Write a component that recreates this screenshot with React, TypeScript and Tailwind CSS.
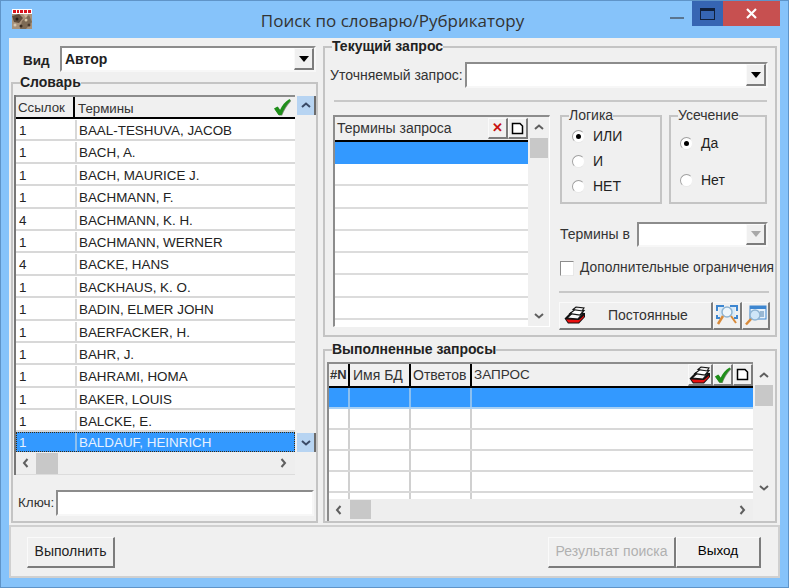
import type { ReactNode } from 'react';

const TERMS: [string, string][] = [
  ['1', 'BAAL-TESHUVA, JACOB'],
  ['1', 'BACH, A.'],
  ['1', 'BACH, MAURICE J.'],
  ['1', 'BACHMANN, F.'],
  ['4', 'BACHMANN, K. H.'],
  ['1', 'BACHMANN, WERNER'],
  ['4', 'BACKE, HANS'],
  ['1', 'BACKHAUS, K. O.'],
  ['1', 'BADIN, ELMER JOHN'],
  ['1', 'BAERFACKER, H.'],
  ['1', 'BAHR, J.'],
  ['1', 'BAHRAMI, HOMA'],
  ['1', 'BAKER, LOUIS'],
  ['1', 'BALCKE, E.'],
];

const raised = 'border-t border-l border-t-[#fafafa] border-l-[#fafafa] border-b-2 border-r-2 border-b-[#7c7c7c] border-r-[#7c7c7c] bg-[#f0f0f0]';
const sunken = 'border-t-2 border-l-2 border-t-[#8c8c8c] border-l-[#8c8c8c] border-b-2 border-r-2 border-b-[#f7f7f7] border-r-[#f7f7f7] bg-white';

function Chevron({ dir, dark }: { dir: 'up' | 'down' | 'left' | 'right'; dark?: boolean }) {
  const paths = {
    up: 'M2 7L6 3.5L10 7',
    down: 'M2 4L6 7.5L10 4',
    left: 'M7.5 2L4 6L7.5 10',
    right: 'M4.5 2L8 6L4.5 10',
  };
  return (
    <svg width="12" height="12" viewBox="0 0 12 12" fill="none" stroke={dark ? '#3a4a66' : '#5f5f5f'} strokeWidth="2">
      <path d={paths[dir]} />
    </svg>
  );
}

function ComboArrow({ muted }: { muted?: boolean }) {
  return (
    <div className={`w-[20px] h-full flex items-center justify-center ${raised}`}>
      <svg width="10" height="6" viewBox="0 0 10 6">
        <path d="M0 0H10L5 6Z" fill={muted ? '#a8a8a8' : '#000'} />
      </svg>
    </div>
  );
}

function Group({ title, className, bold, children }: { title: string; className: string; bold?: boolean; children?: ReactNode }) {
  return (
    <div className={`relative border-2 border-[#c4c4c4] ${className}`}>
      <span className={`absolute -top-[9px] bg-[#f0f0f0] leading-[14px] text-[14px] ${bold ? 'left-[7px] font-bold text-[#222]' : 'left-[7px] text-[#333]'}`}>
        {title}
      </span>
      {children}
    </div>
  );
}

function Radio({ label, checked, className }: { label: string; checked?: boolean; className?: string }) {
  return (
    <div className={`flex items-center gap-[8px] h-[16px] ${className ?? ''}`}>
      <div className="w-[13px] h-[13px] rounded-full bg-white border border-[#a0a0a0] border-r-[#f0f0f0] border-b-[#e8e8e8] flex items-center justify-center">
        {checked && <div className="w-[5px] h-[5px] rounded-full bg-black" />}
      </div>
      <span className="text-[14px] text-[#222]">{label}</span>
    </div>
  );
}

function StampIcon() {
  return (
    <svg width="22" height="18" viewBox="0 0 22 18">
      <path d="M0.5 12.5L7 6L21 7V11L15 17.5H4Z" fill="#111" />
      <path d="M2 13.5L15 14L20 9.5V11L14.5 16.5H4.5Z" fill="#e80f0f" />
      <path d="M3 12L9 6.5L19 7.5L14 13Z" fill="#f6f6f6" stroke="#111" strokeWidth="1.2" />
      <path d="M6 7.5L11 3.5L20 4.5L16 9Z" fill="#fff" stroke="#111" strokeWidth="1.2" />
      <path d="M9 3.5L12 1L20 2L18 5Z" fill="#ececec" stroke="#111" strokeWidth="1.1" />
    </svg>
  );
}

function CheckIcon({ size = 18 }: { size?: number }) {
  return (
    <svg width={size} height={size} viewBox="0 0 18 18">
      <path d="M1 10.5L4.5 8.5L7 12C9 7.5 12 3.5 16.5 1L17.5 2.5C13.5 6.5 10.5 11.5 8.5 17H5.5Z" fill="#7a8a74" transform="translate(0.6 0.6)" />
      <path d="M1 10.5L4.5 8.5L7 12C9 7.5 12 3.5 16.5 1L17.5 2.5C13.5 6.5 10.5 11.5 8.5 17H5.5Z" fill="#1f8f1a" />
    </svg>
  );
}

function PageIcon() {
  return (
    <svg width="13" height="13" viewBox="0 0 13 13" fill="#fff" stroke="#000" strokeWidth="1.5">
      <path d="M1.5 1.5H9L11.5 4V11.5H1.5Z" />
    </svg>
  );
}

function LensIcon({ window: win }: { window?: boolean }) {
  if (win) {
    return (
      <svg width="22" height="22" viewBox="0 0 22 22">
        <rect x="5" y="2" width="16" height="13" fill="#e8f2fb" stroke="#3d86d0" />
        <rect x="5" y="2" width="16" height="3" fill="#3d86d0" />
        <rect x="15" y="7" width="4" height="6" fill="#9ab8d4" />
        <circle cx="10" cy="11" r="5" fill="#cfe6f8" stroke="#8fb4d2" strokeWidth="1.5" />
        <path d="M6 15L1 20.5" stroke="#d88a3a" strokeWidth="2.5" />
      </svg>
    );
  }
  return (
    <svg width="22" height="22" viewBox="0 0 22 22">
      <path d="M1 7V2H8M14 2H21V7M1 11V14H4M18 14H21V11" fill="none" stroke="#3d86d0" strokeWidth="2" />
      <rect x="3" y="3" width="16" height="10" fill="#d8eaf8" />
      <circle cx="11" cy="8" r="5" fill="#eef6fc" stroke="#8fb4d2" strokeWidth="1.5" />
      <path d="M7 12L2 20" stroke="#d88a3a" strokeWidth="2.5" />
      <path d="M15 12L20 19" stroke="#d88a3a" strokeWidth="2" />
    </svg>
  );
}

function AppLogo() {
  return (
    <svg width="20" height="20" viewBox="0 0 20 20">
      <rect width="20" height="20" fill="#a8927a" />
      <rect width="20" height="5" fill="#fff" />
      <path d="M1 1h3v3H1zM5 1h2v3H5zM8 1h3v3H8zM12 1h3v3h-3zM16 1h3v3h-3z" fill="#d8141c" />
      <path d="M0 7L7 5L11 9L7 14L2 13Z" fill="#5e4c3c" />
      <path d="M10 12L17 6L20 13L14 20H8Z" fill="#7d6a54" />
      <path d="M11 5H16L14 9Z" fill="#c8b498" />
      <circle cx="5" cy="10" r="1.5" fill="#2a2018" />
      <circle cx="14" cy="11" r="1.5" fill="#d8c8a8" />
      <circle cx="9" cy="17" r="1.5" fill="#3a2c20" />
      <circle cx="3" cy="16" r="1.5" fill="#d4c6b0" />
      <circle cx="17" cy="16" r="1.5" fill="#4a3a2c" />
    </svg>
  );
}

function TermsTable() {
  return (
    <div className="w-[283px] border-l-2 border-[#777]">
      <div className="h-[24px] flex bg-[#f0f0f0] border-t-2 border-[#8c8c8c] border-b-2 border-b-black text-[13.3px] text-[#333] leading-[21px]">
        <div className="w-[59px] pl-[2px] border-r-2 border-black">Ссылок</div>
        <div className="flex-1 pl-[3px] flex justify-between pr-[4px] pt-[1px]">
          <span>Термины</span>
          <CheckIcon />
        </div>
      </div>
      <div className="h-[333px] overflow-hidden bg-white">
        {TERMS.map(([n, term]) => (
          <div key={term} className="h-[22.4px] flex border-b-2 border-[#d8d8d8] text-[13.4px] text-[#222] leading-[21px] pt-[1px]">
            <div className="w-[61px] pl-[3px] border-r-2 border-[#d8d8d8]">{n}</div>
            <div className="flex-1 pl-[2px]">{term}</div>
          </div>
        ))}
        <div className="h-[20px] flex bg-[#3399ff] text-[13.4px] text-[#e8f2ff] leading-[20px] border border-dotted border-[#3a2a10]">
          <div className="w-[60px] pl-[2px] border-r-2 border-[#8cc0f0]">1</div>
          <div className="flex-1 pl-[2px]">BALDAUF, HEINRICH</div>
        </div>
      </div>
      <div className="h-[23px] flex items-center bg-[#eeeeee] border-b border-[#dcdcdc] pl-[4px] pr-[6px]">
        <Chevron dir="left" />
        <div className="w-[22px] h-[21px] bg-[#c8c8c8] ml-[4px]" />
        <div className="flex-1" />
        <Chevron dir="right" />
      </div>
    </div>
  );
}

function BlueScrollBtn({ dir }: { dir: 'up' | 'down' }) {
  return (
    <div className="w-[19px] h-[19px] flex items-center justify-center bg-[#b7d4f2] border-r-2 border-r-[#6b6b6b]">
      <Chevron dir={dir} dark />
    </div>
  );
}

function Dictionary() {
  return (
    <div className="w-[311px] shrink-0 flex flex-col pl-[2px]">
      <div className="flex items-center h-[26px] mt-[8px]">
        <span className="w-[49px] pl-[12px] text-[13.5px] font-bold text-[#222] mt-[4px]">Вид</span>
        <div className={`w-[256px] h-[26px] flex ${sunken}`}>
          <span className="flex-1 pl-[3px] text-[14px] font-bold text-[#222] leading-[23px]">Автор</span>
          <ComboArrow />
        </div>
      </div>
      <Group title="Словарь" bold className="w-[307px] h-[441px] mt-[10px] pt-[11px] pl-[1px]">
        <div className="flex">
          <TermsTable />
          <div className="w-[19px] ml-[2px] h-[357px] pt-[1px] flex flex-col justify-between">
            <BlueScrollBtn dir="up" />
            <BlueScrollBtn dir="down" />
          </div>
        </div>
        <div className="flex items-center mt-[15px] pl-[4px] pr-[2px]">
          <span className="w-[38px] text-[13.5px] text-[#333] mt-[1px]">Ключ:</span>
          <div className={`flex-1 h-[26px] ${sunken}`} />
        </div>
      </Group>
    </div>
  );
}

function QueryTerms() {
  return (
    <div className="w-[217px] h-[212px] shrink-0 border-t-2 border-l-2 border-[#8c8c8c] border-r border-b border-r-white border-b-white bg-[#f0f0f0] flex">
      <div className="w-[193px] flex flex-col">
        <div className="h-[25px] flex items-center border-b-2 border-black pl-[2px] text-[14px] text-[#333]">
          <span className="flex-1 whitespace-nowrap">Термины запроса</span>
          <div className={`w-[20px] h-[21px] flex items-center justify-center text-[#c81010] font-bold text-[13px] ${raised}`}>✕</div>
          <div className={`w-[20px] h-[21px] flex items-center justify-center ${raised}`}>
            <PageIcon />
          </div>
        </div>
        <div className="flex-1 bg-white overflow-hidden">
          <div className="h-[22px] bg-[#3399ff]" />
          {[0, 1, 2, 3, 4, 5, 6, 7].map((i) => (
            <div key={i} className="h-[22.3px] border-b-2 border-[#dcdcdc]" />
          ))}
        </div>
      </div>
      <div className="flex-1 flex flex-col items-center pt-[5px] pb-[4px]">
        <Chevron dir="up" />
        <div className="w-[18px] h-[20px] bg-[#c8c8c8] mt-[4px]" />
        <div className="flex-1" />
        <Chevron dir="down" />
      </div>
    </div>
  );
}

function QueryOptions() {
  return (
    <div className="w-[211px] ml-[10px] flex flex-col">
      <div className="flex gap-[7px] h-[89px]">
        <Group title="Логика" className="w-[102px] pl-[10px] pt-[11px] flex flex-col gap-[9px]">
          <Radio label="ИЛИ" checked />
          <Radio label="И" />
          <Radio label="НЕТ" />
        </Group>
        <Group title="Усечение" className="w-[98px] pl-[9px] pt-[18px] flex flex-col gap-[21px]">
          <Radio label="Да" checked />
          <Radio label="Нет" />
        </Group>
      </div>
      <div className="flex items-center mt-[18px] h-[25px]">
        <span className="w-[77px] text-[14px] text-[#333] whitespace-nowrap">Термины в</span>
        <div className={`w-[131px] h-[25px] flex ${sunken}`}>
          <div className="flex-1" />
          <ComboArrow muted />
        </div>
      </div>
      <div className="flex items-center gap-[6px] mt-[11px] whitespace-nowrap">
        <div className="w-[14px] h-[15px] shrink-0 bg-white border border-[#8c8c8c] border-r-[#e8e8e8] border-b-[#e8e8e8]" />
        <span className="text-[13.8px] text-[#333]">Дополнительные ограничения</span>
      </div>
      <div className="h-[2px] bg-[#c8c8c8] mt-[12px] w-[210px] -ml-[1px]" />
      <div className="flex mt-[9px] -ml-[1px] h-[28px]">
        <div className={`w-[154px] flex items-center pl-[4px] text-[14px] text-[#333] ${raised}`}>
          <StampIcon />
          <span className="ml-[22px]">Постоянные</span>
        </div>
        <div className={`w-[29px] flex items-center justify-center ${raised}`}>
          <LensIcon />
        </div>
        <div className={`w-[28px] flex items-center justify-center ${raised}`}>
          <LensIcon window />
        </div>
      </div>
    </div>
  );
}

function CurrentQuery() {
  return (
    <Group title="Текущий запрос" bold className="h-[291px] mt-[8px] pl-[5px] pt-[14px]">
      <div className="flex items-center h-[26px]">
        <span className="w-[135px] text-[14px] text-[#333] whitespace-nowrap">Уточняемый запрос:</span>
        <div className={`w-[303px] h-[26px] flex ${sunken}`}>
          <div className="flex-1" />
          <ComboArrow />
        </div>
      </div>
      <div className="h-[2px] bg-[#c8c8c8] mt-[12px] ml-[4px] w-[433px]" />
      <div className="flex mt-[13px] ml-[3px]">
        <QueryTerms />
        <QueryOptions />
      </div>
    </Group>
  );
}

function HistoryRow({ selected }: { selected?: boolean }) {
  const line = selected ? 'border-[#8cc0f0]' : 'border-[#d0d0d0]';
  return (
    <div className={`h-[21px] flex border-b-2 ${selected ? 'bg-[#3399ff] border-[#a8d0f4]' : 'border-[#d8d8d8]'}`}>
      <div className={`w-[21px] border-r-2 ${line}`} />
      <div className={`w-[61px] border-r-2 ${line}`} />
      <div className={`w-[61px] border-r-2 ${line}`} />
    </div>
  );
}

function History() {
  return (
    <Group title="Выполненные запросы" bold className="h-[174px] mt-[12px] pl-[2px] pt-[11px] flex">
      <div className="w-[426px] border-l-2 border-t-2 border-[#8c8c8c] flex flex-col">
        <div className="h-[24px] shrink-0 flex bg-[#f0f0f0] border-b-2 border-black text-[14px] text-[#333] leading-[22px]">
          <div className="w-[21px] border-r-2 border-black font-bold overflow-hidden pl-[1px] text-[13px]">#N</div>
          <div className="w-[61px] border-r-2 border-black pl-[3px]">Имя БД</div>
          <div className="w-[61px] border-r-2 border-black pl-[2px] overflow-hidden whitespace-nowrap">Ответов</div>
          <div className="flex-1 pl-[2px] text-[13.5px]">ЗАПРОС</div>
          <div className={`w-[25px] flex items-center justify-center ${raised}`}>
            <StampIcon />
          </div>
          <div className={`w-[20px] flex items-center justify-center ${raised}`}>
            <CheckIcon />
          </div>
          <div className={`w-[20px] flex items-center justify-center ${raised}`}>
            <PageIcon />
          </div>
        </div>
        <div className="h-[111px] bg-white overflow-hidden">
          <HistoryRow selected />
          <HistoryRow />
          <HistoryRow />
          <HistoryRow />
          <HistoryRow />
          <HistoryRow />
        </div>
        <div className="h-[21px] flex items-center bg-[#eeeeee] pl-[4px] pr-[5px]">
          <Chevron dir="left" />
          <div className="w-[21px] h-[19px] bg-[#c8c8c8] ml-[5px]" />
          <div className="flex-1" />
          <Chevron dir="right" />
        </div>
      </div>
      <div className="w-[22px] flex flex-col items-center pt-[8px] pb-[27px]">
        <Chevron dir="up" />
        <div className="w-[18px] h-[21px] bg-[#c8c8c8] mt-[3px]" />
        <div className="flex-1" />
        <Chevron dir="down" />
      </div>
    </Group>
  );
}

function Footer() {
  return (
    <div className="h-[53px] mt-[2px] border-2 border-[#d0d0d0] flex items-center pl-[16px] pr-[17px] pt-[1px] text-[14px] text-[#222]">
      <button className={`w-[88px] h-[31px] ${raised}`}>Выполнить</button>
      <div className="flex-1" />
      <button className={`w-[128px] h-[31px] text-[#b0b0b0] ${raised}`}>Результат поиска</button>
      <button className={`w-[85px] h-[31px] text-black text-[13.5px] ${raised}`}>Выход</button>
    </div>
  );
}

export default function App() {
  return (
    <div className="w-[789px] h-[588px] bg-[#86c3fa] border border-[#5f94c8] flex flex-col overflow-hidden [font-family:'Liberation_Sans',Arial,sans-serif]">
      <div className="h-[37px] shrink-0 flex">
        <div className="pl-[11px] pt-[8px]">
          <AppLogo />
        </div>
        <div className="flex-1 text-center text-[17px] text-[#333] pt-[7px] pl-[92px] [font-family:'Open_Sans',sans-serif]">
          Поиск по словарю/Рубрикатору
        </div>
        <div className="flex h-[25px] mr-[8px]">
          <div className="w-[31px] flex items-end justify-center pb-[7px]">
            <div className="w-[14px] h-[2px] bg-[#5a7590]" />
          </div>
          <div className="w-[31px] bg-[#3665b3] flex items-center justify-center">
            <div className="w-[15px] h-[12px] border border-[#10203c] border-t-[3px]" />
          </div>
          <div className="w-[57px] bg-[#c75050] flex items-center justify-center">
            <svg width="11" height="11" viewBox="0 0 11 11" stroke="#fff" strokeWidth="2.2">
              <path d="M1 1L10 10M10 1L1 10" />
            </svg>
          </div>
        </div>
      </div>
      <div className="w-[771px] h-[540px] ml-[8px] bg-[#f0f0f0] flex flex-col">
        <div className="flex h-[485px]">
          <Dictionary />
          <div className="flex-1 flex flex-col pl-[3px] pr-[3px]">
            <CurrentQuery />
            <History />
          </div>
        </div>
        <Footer />
      </div>
    </div>
  );
}
